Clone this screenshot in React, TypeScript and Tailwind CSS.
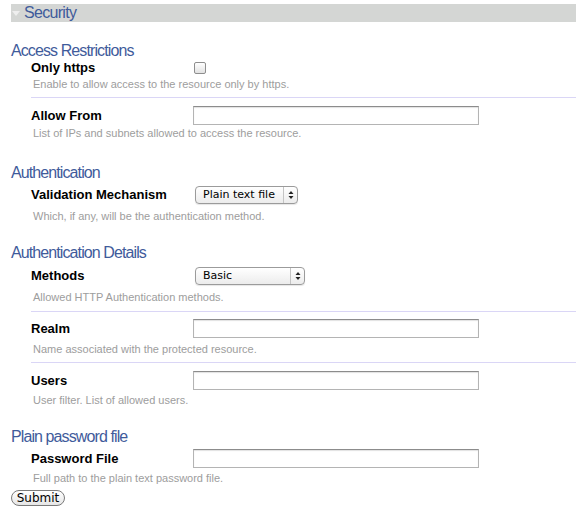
import React from 'react'

const sans = "font-['Liberation_Sans',Arial,Helvetica,sans-serif]"
const ui = "font-['DejaVu_Sans',Verdana,sans-serif]"

function Heading({ children, className = '' }: { children: React.ReactNode; className?: string }) {
  return (
    <h2 className={`ml-[11px] text-[16px] leading-[16px] tracking-[-0.9px] text-[#3f5b9b] ${className}`}>
      {children}
    </h2>
  )
}

function TextInput() {
  return (
    <input
      type="text"
      className="w-[286px] h-[19px] border border-[#b4b4b4] border-t-[#8c8c8c] bg-white shadow-[inset_0_1px_1px_rgba(0,0,0,0.12)] outline-none"
    />
  )
}

function Select({ value, width }: { value: string; width: string }) {
  return (
    <div
      className={`${width} h-[18px] flex items-center rounded-[4px] border border-[#9b9b9b] bg-gradient-to-b from-white to-[#ececec] shadow-[0_1px_1px_rgba(0,0,0,0.1)] ${ui} text-[11px] text-black`}
    >
      <span className="flex-1 pl-[7px] leading-[16px]">{value}</span>
      <span className="w-[14px] h-full border-l border-[#c4c4c4] flex items-center justify-center">
        <svg width="6" height="10" viewBox="0 0 6 10">
          <polygon points="3,1 5.5,4 0.5,4" fill="#222" />
          <polygon points="0.5,6 5.5,6 3,9" fill="#222" />
        </svg>
      </span>
    </div>
  )
}

function Field({
  label,
  desc,
  control,
  pt,
  descMt,
  pb = 'pb-0',
  sep = false,
}: {
  label: string
  desc: string
  control: React.ReactNode
  pt: string
  descMt: string
  pb?: string
  sep?: boolean
}) {
  return (
    <div className={`ml-[31px] w-[545px] ${pt} ${pb} ${sep ? 'border-b border-[#dad6f6]' : ''}`}>
      <div className="flex items-center">
        <label className={`w-[162px] text-[13px] leading-[16px] font-bold text-black ${sans}`}>{label}</label>
        {control}
      </div>
      <p className={`${descMt} ml-[2px] text-[11px] leading-[14px] text-[#9d9d9d] ${sans}`}>{desc}</p>
    </div>
  )
}

export default function App() {
  return (
    <div className={`min-h-[517px] w-[583px] bg-white ${sans}`}>
      {/* section bar */}
      <div className="pt-[4px]">
        <div className="ml-[11px] w-[565px] h-[18px] bg-[#d4d6d4] flex items-center">
          <svg width="9" height="6" viewBox="0 0 9 6" className="ml-[1px] mt-[1px]">
            <polygon points="0,0 8,0 4,5" fill="#eeeeee" />
          </svg>
          <span className="ml-[3px] text-[16px] leading-[18px] tracking-[-0.7px] text-[#3f5b9b]">Security</span>
        </div>
      </div>

      <Heading className="mt-[21px]">Access Restrictions</Heading>
      <Field
        label="Only https"
        desc="Enable to allow access to the resource only by https."
        pt="pt-[1px]"
        descMt="mt-[1px]"
        pb="pb-[6px]"
        sep
        control={
          <span className="ml-[1px] w-[12px] h-[12px] rounded-[2px] border border-[#8e8e8e] bg-gradient-to-b from-white to-[#e2e2e2]" />
        }
      />
      <Field
        label="Allow From"
        desc="List of IPs and subnets allowed to access the resource."
        pt="pt-[8px]"
        descMt="mt-[1px]"
        control={<TextInput />}
      />

      <Heading className="mt-[25px]">Authentication</Heading>
      <Field
        label="Validation Mechanism"
        desc="Which, if any, will be the authentication method."
        pt="pt-[5px]"
        descMt="mt-[5px]"
        control={<div className="ml-[2px]"><Select value="Plain text file" width="w-[103px]" /></div>}
      />

      <Heading className="mt-[22px]">Authentication Details</Heading>
      <Field
        label="Methods"
        desc="Allowed HTTP Authentication methods."
        pt="pt-[6px]"
        descMt="mt-[5px]"
        pb="pb-[7px]"
        sep
        control={<div className="ml-[2px]"><Select value="Basic" width="w-[110px]" /></div>}
      />
      <Field
        label="Realm"
        desc="Name associated with the protected resource."
        pt="pt-[7px]"
        descMt="mt-[4px]"
        pb="pb-[6px]"
        sep
        control={<TextInput />}
      />
      <Field
        label="Users"
        desc="User filter. List of allowed users."
        pt="pt-[8px]"
        descMt="mt-[3px]"
        control={<TextInput />}
      />

      <Heading className="mt-[22px]">Plain password file</Heading>
      <Field
        label="Password File"
        desc="Full path to the plain text password file."
        pt="pt-[4px]"
        descMt="mt-[3px]"
        control={<TextInput />}
      />

      <button
        className={`mt-0 ml-[11px] w-[54px] h-[16px] rounded-full border border-[#7a7a7a] bg-gradient-to-b from-white to-[#e6e6e6] ${ui} text-[12px] leading-[14px] text-black`}
      >
        Submit
      </button>
    </div>
  )
}
